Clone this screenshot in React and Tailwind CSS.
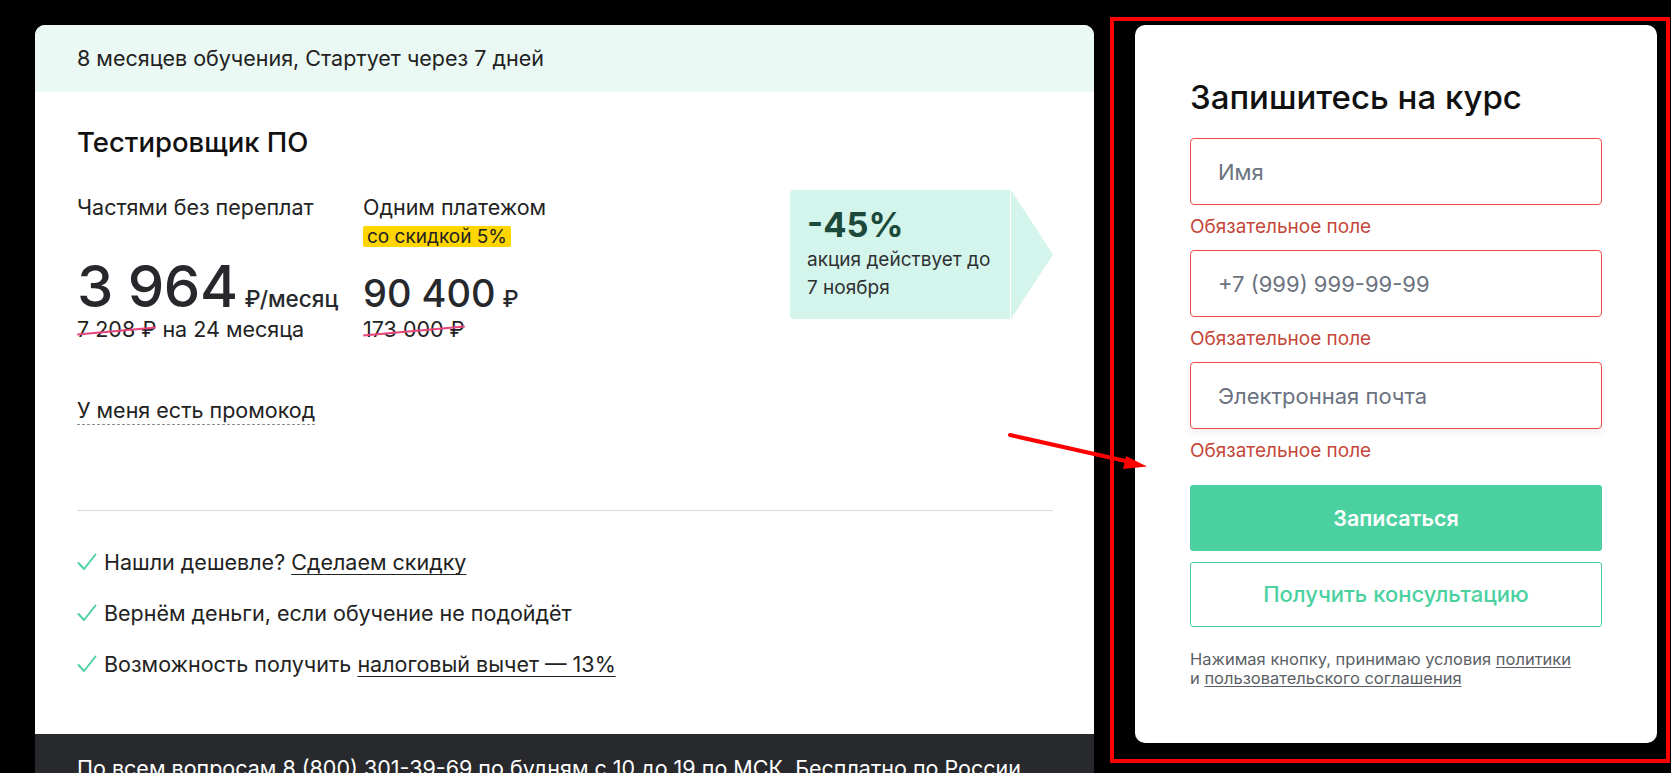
import React from "react"

const font = "font-['Inter',sans-serif]"

const Strike = ({ children }) => {
  return (
    <span className="relative inline-block">
      {children}
      <span className="absolute left-0 right-0 top-[52%] h-[2px] bg-[#e8457a] -rotate-[5deg]"></span>
    </span>
  )
}

const Check = () => {
  return (
    <svg width="20" height="18" viewBox="0 0 20 18" className="mr-[7px] shrink-0">
      <polyline
        points="1.5,10 7,16 18.5,1.5"
        fill="none"
        stroke="#4fd1a4"
        strokeWidth="2"
        strokeLinecap="round"
        strokeLinejoin="round"
      />
    </svg>
  )
}

const Field = ({ placeholder, shadow }) => {
  return (
    <>
      <input
        className={
          "w-full h-[67px] rounded-[4px] border border-[#f04848] bg-white pl-[27px] text-[22px] text-[#222] placeholder:text-[#6b7280] outline-none " +
          (shadow ? "shadow-[0_3px_8px_rgba(0,0,0,0.08)]" : "")
        }
        placeholder={placeholder}
      />
      <div className="mt-[10px] text-[19px] leading-[24px] text-[#c4473a]">Обязательное поле</div>
    </>
  )
}

export default function App() {
  return (
    <div className={"relative h-[773px] overflow-hidden bg-black " + font}>
      <div className="flex items-start gap-[41px] pl-[35px] pt-[25px]">
        {/* left card */}
        <div className="w-[1059px] bg-white rounded-t-[10px] overflow-hidden text-[#222]">
          <div className="h-[67px] bg-[#ebf9f4] px-[42px] flex items-center text-[21.5px]">
            8 месяцев обучения, Стартует через 7 дней
          </div>
          <div className="pl-[42px] pr-[41px]">
            <h2 className="mt-[32px] text-[27.5px] leading-[36px] font-medium text-[#111]">Тестировщик ПО</h2>
            <div className="flex items-start mt-[30px]">
              <div className="pt-[3px]">
                <div className="flex items-start text-[21.5px] leading-[28px]">
                  <div className="w-[286px]">Частями без переплат</div>
                  <div>
                    <div>Одним платежом</div>
                    <span className="inline-block bg-[#ffd500] px-[4px] text-[19px] leading-[21px] rounded-[2px]">
                      со скидкой 5%
                    </span>
                  </div>
                </div>
                <div className="flex items-baseline mt-[15px] text-[#27282c]">
                  <div className="w-[286px] flex items-baseline">
                    <span className="text-[58px] leading-[44px] font-medium tracking-[-0.5px]">3 964</span>
                    <span className="ml-[7px] text-[22.5px] leading-[28px] font-medium">₽/месяц</span>
                  </div>
                  <div className="flex items-baseline">
                    <span className="text-[38px] leading-[44px] font-medium">90 400</span>
                    <span className="ml-[7px] text-[22.5px] leading-[28px] font-medium">₽</span>
                  </div>
                </div>
                <div className="flex text-[21.5px] leading-[28px]">
                  <div className="w-[286px]">
                    <Strike>7 208 ₽</Strike> на 24 месяца
                  </div>
                  <div>
                    <Strike>173 000 ₽</Strike>
                  </div>
                </div>
              </div>
              <div className="ml-auto flex">
                <div className="w-[220px] h-[129px] bg-[#d4f5eb] rounded-l-[4px] pl-[17px] pt-[15px]">
                  <div className="text-[34.5px] leading-[40px] font-bold text-[#1c4a3a]">-45%</div>
                  <div className="mt-[1px] text-[19px] leading-[28px] text-[#2f3033]">
                    акция действует до
                    <br />7 ноября
                  </div>
                </div>
                <svg width="42" height="129" viewBox="0 0 42 129" className="ml-px">
                  <polygon points="0,0 42,64.5 0,129" fill="#d4f5eb" />
                </svg>
              </div>
            </div>
            <div className="mt-[53px] text-[21.5px] leading-[28px]">
              <span className="border-b border-dashed border-[#8d8f94] pb-[1px]">У меня есть промокод</span>
            </div>
            <div className="mt-[86px] h-px bg-[#d6dbe1]"></div>
            <div className="mt-[37px] flex flex-col gap-[23px] text-[21.5px] leading-[28px]">
              <div className="flex items-center">
                <Check />
                <span>
                  Нашли дешевле? <span className="underline underline-offset-4 decoration-1">Сделаем скидку</span>
                </span>
              </div>
              <div className="flex items-center">
                <Check />
                <span>Вернём деньги, если обучение не подойдёт</span>
              </div>
              <div className="flex items-center">
                <Check />
                <span>
                  Возможность получить{" "}
                  <span className="underline underline-offset-4 decoration-1">налоговый вычет — 13%</span>
                </span>
              </div>
            </div>
          </div>
          <div className="mt-[56px] bg-[#28292d] px-[42px] pt-[20px] pb-[30px] text-[21.5px] leading-[28px] text-white">
            По всем вопросам 8 (800) 301-39-69 по будням с 10 до 19 по МСК. Бесплатно по России
          </div>
        </div>

        {/* right card */}
        <div className="w-[522px] h-[718px] bg-white rounded-[10px] px-[55px] pt-[52px]">
          <h2 className="text-[33px] leading-[40px] font-medium text-[#111]">Запишитесь на курс</h2>
          <div className="mt-[21px] flex flex-col">
            <Field placeholder="Имя" />
            <div className="mt-[11px]"></div>
            <Field placeholder="+7 (999) 999-99-99" />
            <div className="mt-[11px]"></div>
            <Field placeholder="Электронная почта" shadow />
          </div>
          <button className="mt-[22px] w-full h-[66px] rounded-[3px] bg-[#4bd1a0] text-white text-[21.5px] font-semibold">
            Записаться
          </button>
          <button className="mt-[11px] w-full h-[65px] rounded-[3px] border border-[#4bd1a0] bg-white text-[#4bd1a0] text-[22px] font-medium">
            Получить консультацию
          </button>
          <p className="mt-[23px] text-[16.5px] leading-[19px] text-[#5b5f66]">
            Нажимая кнопку, принимаю условия <span className="underline underline-offset-2">политики</span>
            <br />и <span className="underline underline-offset-2">пользовательского соглашения</span>
          </p>
        </div>
      </div>

      {/* annotation overlay */}
      <div className="pointer-events-none absolute left-[1110px] top-[17px] w-[560px] h-[746px] border-4 border-[#ff0000]"></div>
      <svg className="pointer-events-none absolute left-0 top-0" width="1671" height="773">
        <line x1="1010" y1="435" x2="1130" y2="462" stroke="#ff0000" strokeWidth="4" strokeLinecap="round" />
        <polygon points="1147,466.5 1126,456 1123,469" fill="#ff0000" />
      </svg>
    </div>
  )
}
